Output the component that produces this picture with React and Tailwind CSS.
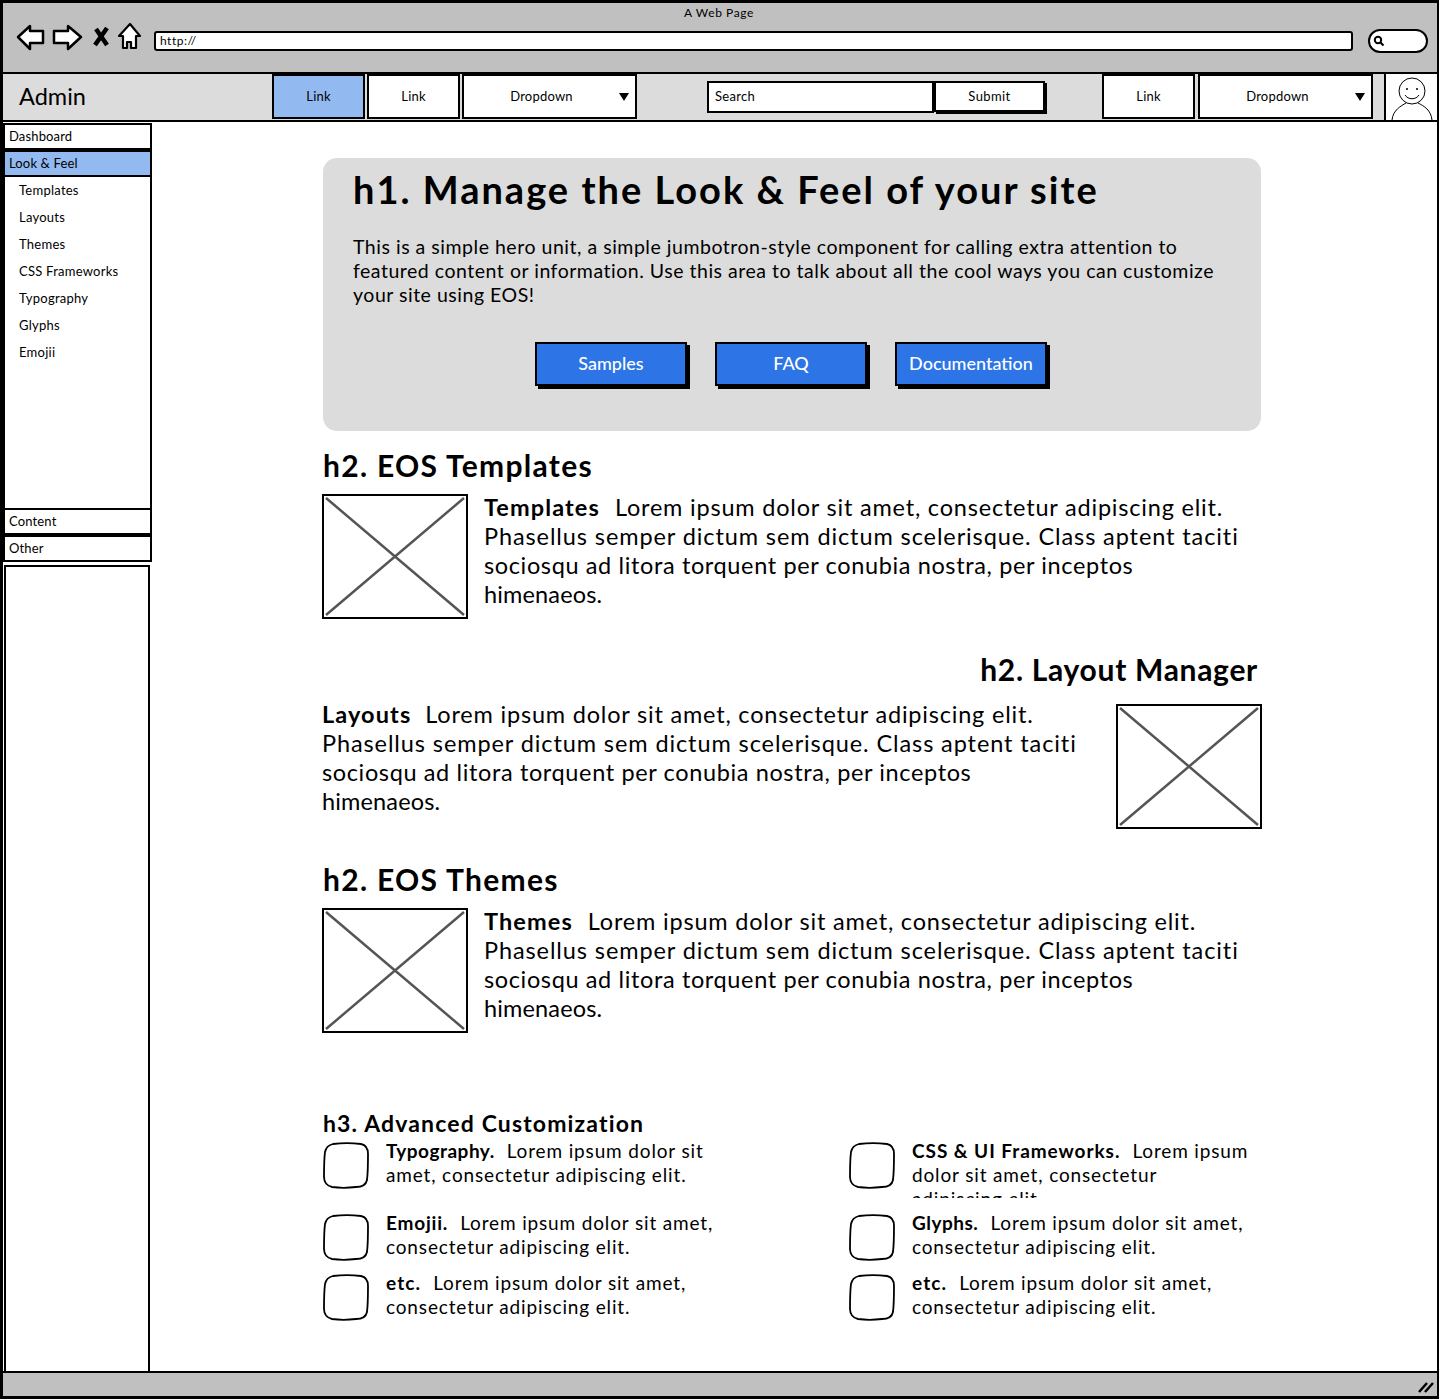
const font = { fontFamily: '"Lato", "Open Sans", sans-serif' };

function Placeholder() {
  return (
    <svg width="146" height="125" viewBox="0 0 146 125" className="shrink-0 block">
      <rect x="1" y="1" width="144" height="123" fill="#fff" stroke="#000" strokeWidth="2" />
      <path d="M4 4 L142 121 M142 4 L4 121" stroke="#555" strokeWidth="2.5" fill="none" />
    </svg>
  );
}

function IconBox() {
  return (
    <svg width="46" height="47" viewBox="0 0 46 47" className="shrink-0 block">
      <path
        d="M10 2 C18 1 30 1 38 2 C43 3 45 7 45 12 C45 20 45 30 44 38 C43 43 38 45 33 45 C25 46 16 46 9 45 C4 44 1 40 1 35 C1 26 1 18 2 10 C3 5 6 3 10 2 Z"
        fill="#fff"
        stroke="#000"
        strokeWidth="1.8"
      />
    </svg>
  );
}

function NavCell({ width, active, children }) {
  return (
    <div
      className={`flex h-[45px] items-center justify-center border-2 border-black text-[13px] tracking-[0.2px] ${width} ${
        active ? "bg-[#93baf0]" : "bg-white"
      }`}
    >
      {children}
    </div>
  );
}

function NavDropdown() {
  return (
    <div className="relative flex h-[45px] w-[175px] items-center justify-center border-2 border-black bg-white pr-[16px] text-[13px] tracking-[0.2px]">
      Dropdown
      <span className="absolute right-[6px] top-[17px] h-0 w-0 border-x-[5px] border-t-[8px] border-x-transparent border-t-black" />
    </div>
  );
}

function SideItem({ active, children }) {
  return (
    <div
      className={`flex h-[27px] items-center border-2 border-black pl-[4px] text-[13px] tracking-[0.15px] ${
        active ? "bg-[#93baf0]" : "bg-white"
      }`}
    >
      {children}
    </div>
  );
}

// Lato runs narrower on some lines than the sketch font, so each line has its own spacing
const body = [
  { text: "Lorem ipsum dolor sit amet, consectetur adipiscing elit.", cls: "tracking-[0.8px]" },
  { text: "Phasellus semper dictum sem dictum scelerisque. Class aptent taciti", cls: "tracking-[0.9px]" },
  { text: "sociosqu ad litora torquent per conubia nostra, per inceptos", cls: "tracking-[0.63px]" },
  { text: "himenaeos.", cls: "tracking-[0.15px]" },
];

function MediaText({ title, gap }) {
  return (
    <div className="whitespace-nowrap text-[23.5px] leading-[29px]">
      <div>
        <b className="tracking-[1.1px]">{title}</b>
        <span className={`${body[0].cls} ${gap}`}>{body[0].text}</span>
      </div>
      {body.slice(1).map((l) => (
        <div key={l.text} className={l.cls}>{l.text}</div>
      ))}
    </div>
  );
}

function Feature({ title, bold = "tracking-[0.5px]", first, rest, height, mb }) {
  return (
    <div className={`flex items-start ${mb}`}>
      <IconBox />
      <div className={`ml-[17px] -mt-[3px] overflow-hidden whitespace-nowrap text-[19px] leading-[24px] tracking-[0.85px] ${height}`}>
        <div>
          <b className={bold}>{title}</b>
          <span className="ml-[12px]">{first}</span>
        </div>
        {rest.map((l) => (
          <div key={l}>{l}</div>
        ))}
      </div>
    </div>
  );
}

const sub = ["Templates", "Layouts", "Themes", "CSS Frameworks", "Typography", "Glyphs", "Emojii"];

export default function App() {
  return (
    <div style={font} className="h-[1400px] w-[1440px] bg-white text-black">
      <div className="flex h-[1399px] w-[1439px] flex-col border-[3px] border-r-2 border-black">
        {/* browser chrome */}
        <div className="relative h-[71px] shrink-0 border-b-[2px] border-black bg-[#c0c0c0]">
          <div className="pr-[2px] pt-[2px] text-center text-[12px] leading-[15px] tracking-[0.6px]">A Web Page</div>
          <div className="absolute left-[13px] top-[19px] flex items-center">
            <svg width="130" height="32" viewBox="0 0 130 32" className="block">
              <path d="M2 15 L14 4 L14 9 L27 9 L27 21 L14 21 L14 27 Z" fill="#fff" stroke="#000" strokeWidth="2.5" strokeLinejoin="round" />
              <path d="M65 15 L52 4 L52 9 L38 9 L38 21 L52 21 L52 27 Z" fill="#fff" stroke="#000" strokeWidth="2.5" strokeLinejoin="round" />
              <path d="M80 7 L91 23 M91 6 L79 23" stroke="#000" strokeWidth="4.5" fill="none" />
              <path d="M114 2 L124 14 L120 14 L120 26 L115 26 L115 20 L111 20 L111 26 L107 26 L107 14 L103 14 Z" fill="#fff" stroke="#000" strokeWidth="2.2" strokeLinejoin="round" />
            </svg>
            <div className="ml-[8px] mt-[6px] flex h-[20px] w-[1199px] items-center rounded-[3px] border-2 border-black bg-white pl-[4px] text-[12px] tracking-[0.5px]">
              http://
            </div>
            <div className="ml-[15px] mt-[6px] flex h-[24px] w-[60px] items-center rounded-[12px] border-2 border-black bg-white pl-[3px]">
              <svg width="12" height="12" viewBox="0 0 12 12" className="block">
                <circle cx="5" cy="5" r="3.2" fill="none" stroke="#000" strokeWidth="2" />
                <path d="M7.5 7.5 L10.5 10.5" stroke="#000" strokeWidth="2.2" />
              </svg>
            </div>
          </div>
        </div>

        {/* navbar */}
        <div className="flex h-[48px] shrink-0 items-center border-b-[2px] border-black bg-[#dcdcdc] pb-[1px]">
          <div className="w-[269px] pl-[16px] text-[23.5px]">Admin</div>
          <div className="flex gap-[2px]">
            <NavCell width="w-[93px]" active>Link</NavCell>
            <NavCell width="w-[93px]">Link</NavCell>
            <NavDropdown />
          </div>
          <div className="ml-[70px] flex items-center">
            <div className="flex h-[32px] w-[227px] items-center border-2 border-black bg-white pl-[6px] text-[13px] tracking-[0.3px]">Search</div>
            <div className="flex h-[31px] w-[111px] items-center justify-center border-2 border-black bg-white text-[13px] tracking-[0.4px] shadow-[2px_2px_0_#000]">Submit</div>
          </div>
          <div className="ml-[57px] flex gap-[3px]">
            <NavCell width="w-[93px]">Link</NavCell>
            <NavDropdown />
          </div>
          <div className="relative ml-auto h-[46px] w-[53px] self-start border-l-2 border-black bg-white">
            <svg width="51" height="46" viewBox="0 0 51 46" className="block">
              <circle cx="26" cy="17" r="13" fill="#fff" stroke="#000" strokeWidth="1" />
              <circle cx="21" cy="15" r="1" fill="#000" />
              <circle cx="31" cy="15" r="1" fill="#000" />
              <path d="M19 21 C22 26 30 26 33 21" fill="none" stroke="#000" strokeWidth="1" />
              <path d="M6 46 C7 36 15 32 20 29 M32 29 C38 32 45 36 46 46" fill="none" stroke="#000" strokeWidth="1" />
            </svg>
          </div>
        </div>

        <div className="flex min-h-0 flex-1">
          {/* sidebar */}
          <div className="flex w-[149px] shrink-0 flex-col pt-[1px] text-black">
            <SideItem>Dashboard</SideItem>
            <SideItem active>Look &amp; Feel</SideItem>
            <div className="h-[331px] border-x-2 border-black bg-white pl-[14px]">
              {sub.map((s) => (
                <div key={s} className="flex h-[27px] items-center text-[13px] tracking-[0.25px]">{s}</div>
              ))}
            </div>
            <SideItem>Content</SideItem>
            <SideItem>Other</SideItem>
            <div className="ml-[1px] mr-[2px] mt-[3px] min-h-0 flex-1 border-x-2 border-t-2 border-black bg-white" />
          </div>

          {/* content */}
          <div className="ml-[171px] w-[938px] pt-[36px]">
            <div className="h-[273px] rounded-[14px] bg-[#dcdcdc] px-[30px] pt-[8px]">
              <h1 className="whitespace-nowrap text-[38px] font-bold leading-[46px] tracking-[2px]">h1. Manage the Look &amp; Feel of your site</h1>
              <div className="mt-[23px] whitespace-nowrap text-[19.5px] leading-[24px] tracking-[0.52px]">
                <div>This is a simple hero unit, a simple jumbotron-style component for calling extra attention to</div>
                <div>featured content or information. Use this area to talk about all the cool ways you can customize</div>
                <div>your site using EOS!</div>
              </div>
              <div className="ml-[182px] mt-[35px] flex gap-[28px]">
                {["Samples", "FAQ", "Documentation"].map((b) => (
                  <div key={b} className="flex h-[44px] w-[152px] items-center justify-center border-2 border-black bg-[#2d75e6] pb-[2px] text-[18px] font-medium text-white shadow-[3px_3px_0_#000]">
                    {b}
                  </div>
                ))}
              </div>
            </div>

            <h2 className="mt-[16px] text-[30px] font-bold leading-[36px] tracking-[1.3px]">h2. EOS Templates</h2>
            <div className="-ml-[1px] mt-[11px] flex">
              <Placeholder />
              <div className="ml-[16px] -mt-[1px]">
                <MediaText title="Templates" gap="ml-[15px]" />
              </div>
            </div>

            <h2 className="mt-[32px] pr-[3px] text-right text-[30px] font-bold leading-[36px] tracking-[0.7px]">h2. Layout Manager</h2>
            <div className="-ml-[1px] -mr-[1px] mt-[17px] flex justify-between">
              <div className="-mt-[4px]">
                <MediaText title="Layouts" gap="ml-[14px]" />
              </div>
              <Placeholder />
            </div>

            <h2 className="mt-[32px] text-[30px] font-bold leading-[36px] tracking-[1.3px]">h2. EOS Themes</h2>
            <div className="-ml-[1px] mt-[11px] flex">
              <Placeholder />
              <div className="ml-[16px] -mt-[1px]">
                <MediaText title="Themes" gap="ml-[15px]" />
              </div>
            </div>

            <h3 className="mt-[76px] text-[23px] font-bold leading-[28px] tracking-[1.15px]">h3. Advanced Customization</h3>
            <div className="mt-[5px] grid grid-cols-[526px_1fr]">
              <div>
                <Feature title="Typography." first="Lorem ipsum dolor sit" rest={["amet, consectetur adipiscing elit."]} height="h-[59px]" mb="mb-[16px]" />
                <Feature title="Emojii." bold="tracking-[0.8px]" first="Lorem ipsum dolor sit amet," rest={["consectetur adipiscing elit."]} height="h-[51px]" mb="mb-[12px]" />
                <Feature title="etc." bold="tracking-[1.1px]" first="Lorem ipsum dolor sit amet," rest={["consectetur adipiscing elit."]} height="h-[51px]" mb="" />
              </div>
              <div>
                <Feature title="CSS & UI Frameworks." bold="tracking-[0.95px]" first="Lorem ipsum" rest={["dolor sit amet, consectetur", "adipiscing elit."]} height="h-[59px]" mb="mb-[16px]" />
                <Feature title="Glyphs." first="Lorem ipsum dolor sit amet," rest={["consectetur adipiscing elit."]} height="h-[51px]" mb="mb-[12px]" />
                <Feature title="etc." bold="tracking-[1.1px]" first="Lorem ipsum dolor sit amet," rest={["consectetur adipiscing elit."]} height="h-[51px]" mb="" />
              </div>
            </div>
          </div>
        </div>

        {/* status bar */}
        <div className="relative h-[25px] shrink-0 border-t-2 border-black bg-[#c0c0c0]">
          <svg width="18" height="14" viewBox="0 0 18 14" className="absolute bottom-[2px] right-[2px] block">
            <path d="M2 12 L10 3 M8 12 L16 3" stroke="#000" strokeWidth="2.5" />
          </svg>
        </div>
      </div>
    </div>
  );
}
